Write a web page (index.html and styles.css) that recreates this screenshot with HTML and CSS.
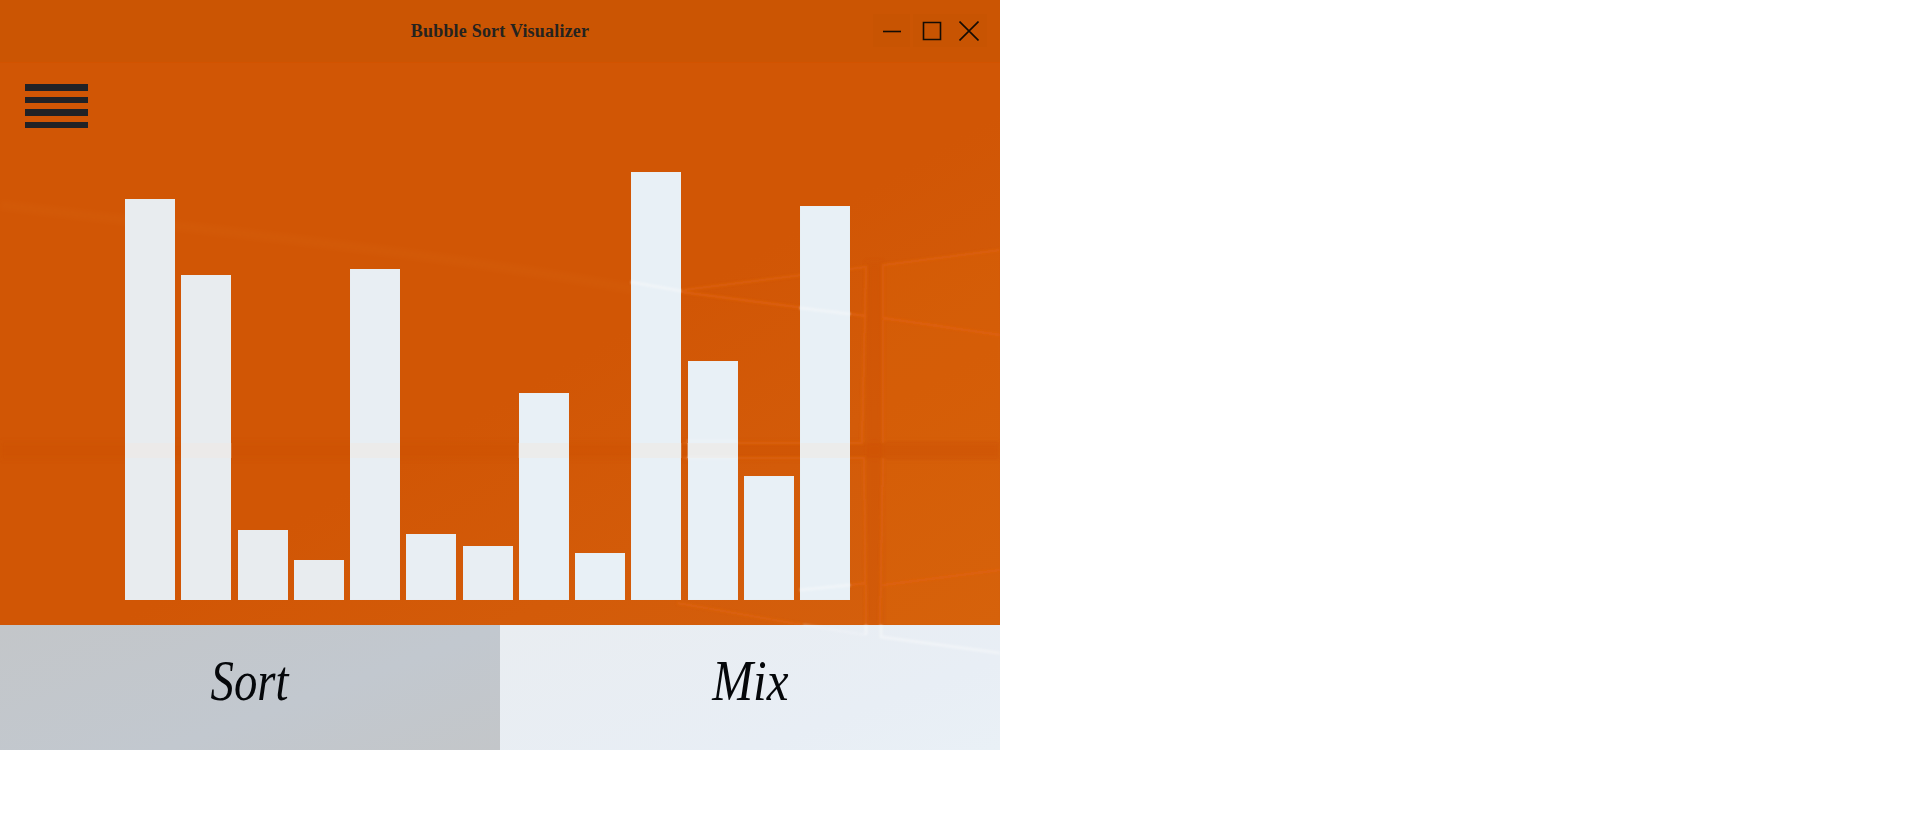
FILE: index.html
```html
<!DOCTYPE html>
<html lang="en">
<head>
  <meta charset="UTF-8" />
  <title>Bubble Sort Visualizer</title>
  <link rel="stylesheet" href="styles.css">
</head>
<body>
  <div class="window">
    <header class="titlebar">
      <span></span>
      <h1 class="title">Bubble Sort Visualizer</h1>
      <div class="controls">
        <button class="control minimize" aria-label="Minimize">
          <svg width="20" height="20" viewBox="0 0 20 20"><path d="M1 10.5H19" /></svg>
        </button>
        <button class="control" aria-label="Maximize">
          <svg width="20" height="20" viewBox="0 0 20 20"><path d="M1.5 1.5H18.5V18.5H1.5Z" /></svg>
        </button>
        <button class="control" aria-label="Close">
          <svg width="20" height="20" viewBox="0 0 20 20"><path d="M0.5 0.5L19.5 19.5M19.5 0.5L0.5 19.5" /></svg>
        </button>
      </div>
    </header>

    <main class="stage">
      <button class="menu" aria-label="Menu">
        <span></span><span></span><span></span><span></span>
      </button>
      <div class="chart">
        <div class="bar" style="height: 401px"></div>
        <div class="bar" style="height: 325px"></div>
        <div class="bar" style="height: 70px"></div>
        <div class="bar" style="height: 40px"></div>
        <div class="bar" style="height: 331px"></div>
        <div class="bar" style="height: 66px"></div>
        <div class="bar" style="height: 54px"></div>
        <div class="bar" style="height: 207px"></div>
        <div class="bar" style="height: 47px"></div>
        <div class="bar" style="height: 428px"></div>
        <div class="bar" style="height: 239px"></div>
        <div class="bar" style="height: 124px"></div>
        <div class="bar" style="height: 394px"></div>
      </div>
    </main>

    <footer class="actions">
      <button class="action sort"><span>Sort</span></button>
      <button class="action mix"><span>Mix</span></button>
    </footer>

    <!-- desktop wallpaper showing through the window, behind the bars -->
    <svg class="wallpaper" width="1000" height="625" viewBox="0 0 1000 625">
      <defs>
        <filter id="soft" x="-10%" y="-10%" width="120%" height="120%"><feGaussianBlur stdDeviation="1" /></filter>
        <filter id="softer" x="-10%" y="-10%" width="120%" height="120%"><feGaussianBlur stdDeviation="2.5" /></filter>
      </defs>
      <path class="streak" filter="url(#softer)" d="M0 205C200 230 420 250 640 290" />
      <g filter="url(#softer)">
        <path class="band" d="M0 443H1000V458H0Z" />
        <path class="band band-v" d="M867 262H882V625H867Z" />
      </g>
      <g filter="url(#soft)">
        <path class="pane" d="M885 265L1000 250V441H885Z" />
        <path class="pane" d="M885 460H1000V625H885Z" />
        <path class="frame" d="M683 290L866 267L862 443H683" />
        <path class="frame" d="M883 443V265L1000 250" />
        <path class="frame" d="M683 458H864L866 625" />
        <path class="frame" d="M677 603L803 625" />
        <path class="frame" d="M883 458L880 625" />
        <path class="ray" d="M681 292L866 316" />
        <path class="ray" d="M883 318L1000 335" />
        <path class="ray" d="M850 585L866 583" />
        <path class="ray" d="M883 585L1000 570" />
      </g>
    </svg>

    <!-- the same wallpaper where it catches the light, over bars and buttons -->
    <svg class="glints" width="1000" height="750" viewBox="0 0 1000 750">
      <path class="glint-band" d="M125 443h50v15h-50ZM181.25 443h50v15h-50ZM350 443h50v15h-50ZM518.75 443h50v15h-50ZM631.25 443h50v15h-50ZM687.5 443h50v15h-50ZM800 443h50v15h-50Z" />
      <g class="glint" filter="url(#soft)">
        <path d="M631 282L681 291" />
        <path d="M800 308L850 314" />
        <path d="M800 590L850 585" />
        <path class="faint" d="M687 441H737" />
        <path class="faint" d="M687 458H737" />
        <path class="faint" d="M803 625L866 635" />
        <path d="M866 625V635" />
        <path d="M881 625V637L1000 653" />
      </g>
    </svg>
  </div>
</body>
</html>
```

FILE: styles.css
```css
* {
  box-sizing: border-box;
}
body {
  margin: 0;
  background: #fff;
}
button {
  border: 0;
  padding: 0;
  background: none;
  color: inherit;
}
.window {
  position: relative;
  width: 1000px;
  height: 750px;
  display: flex;
  flex-direction: column;
  overflow: hidden;
}

.titlebar {
  height: 63px;
  display: grid;
  grid-template-columns: 1fr auto 1fr;
  align-items: center;
  background: #cb5503;
  border-bottom: 1px solid #d25300;
  color: #25231f;
}
.title {
  margin: 1px 0 0;
  font-family: "Liberation Serif", serif;
  font-size: 18px;
  font-weight: bold;
  letter-spacing: 0.2px;
}
.controls {
  justify-self: end;
  display: flex;
  margin-right: 13px;
  margin-bottom: 1px;
}
.control {
  width: 37px;
  height: 33px;
  display: flex;
  align-items: center;
  justify-content: center;
  background: rgba(0, 0, 0, 0.012);
}
.minimize {
  margin-right: 3px;
}
.control svg {
  fill: none;
  stroke: #140c05;
  stroke-width: 1.6;
}

.stage {
  flex: 1;
  display: flex;
  flex-direction: column;
  padding: 21px 0 25px 25px;
  background: linear-gradient(150deg, #d15605 0%, #d15605 55%, #d35b09 75%, #d4600d 100%);
}
.menu {
  position: relative;
  z-index: 2;
  width: 63px;
  display: flex;
  flex-direction: column;
  gap: 6px;
}
.menu span {
  height: 6.5px;
  background: #212226;
}
.chart {
  position: relative;
  z-index: 2;
  flex: 1;
  display: flex;
  align-items: flex-end;
  gap: 6.25px;
  padding-left: 100px;
}
.bar {
  width: 50px;
  background: #e8ecef;
  outline: 1px solid rgba(232, 236, 240, 0.25);
  outline-offset: -1px;
}
.bar:nth-child(n + 5) {
  background: #e8eef3;
}
.bar:nth-child(n + 8) {
  background: #e8f0f6;
}

.actions {
  height: 125px;
  display: flex;
}
.action {
  flex: 1;
  padding-bottom: 14px;
  font-family: "Liberation Serif", serif;
  font-size: 57px;
  font-style: italic;
  line-height: 1;
  color: #05070a;
}
.action span {
  display: inline-block;
  transform: scaleX(0.82);
}
.mix span {
  transform: scaleX(0.86);
}
.sort {
  background: linear-gradient(160deg, #c3c6c9, #c2c8cf 60%, #c3c6c9);
}
.mix {
  background: linear-gradient(160deg, #e9edf1, #e8eef5 70%, #e9f0f6);
}

.wallpaper,
.glints {
  position: absolute;
  top: 0;
  left: 0;
  pointer-events: none;
}
.wallpaper {
  z-index: 1;
}
.glints {
  z-index: 3;
}
.wallpaper .band {
  fill: #cc4e00;
  opacity: 0.4;
}
.wallpaper .band-v {
  opacity: 0.22;
}
.wallpaper .pane {
  fill: #e8690f;
  opacity: 0.12;
}
.wallpaper .frame {
  fill: none;
  stroke: #e4650d;
  stroke-width: 3;
  opacity: 0.5;
}
.wallpaper .ray {
  fill: none;
  stroke: #e2640c;
  stroke-width: 3;
  opacity: 0.65;
}
.wallpaper .streak {
  fill: none;
  stroke: #e88a30;
  stroke-width: 10;
  opacity: 0.06;
}
.glint-band {
  fill: #efe9e4;
  opacity: 0.6;
}
.glint path {
  fill: none;
  stroke: #f6f8fa;
  stroke-width: 3;
  opacity: 0.6;
}
.glint .faint {
  opacity: 0.25;
}
```
